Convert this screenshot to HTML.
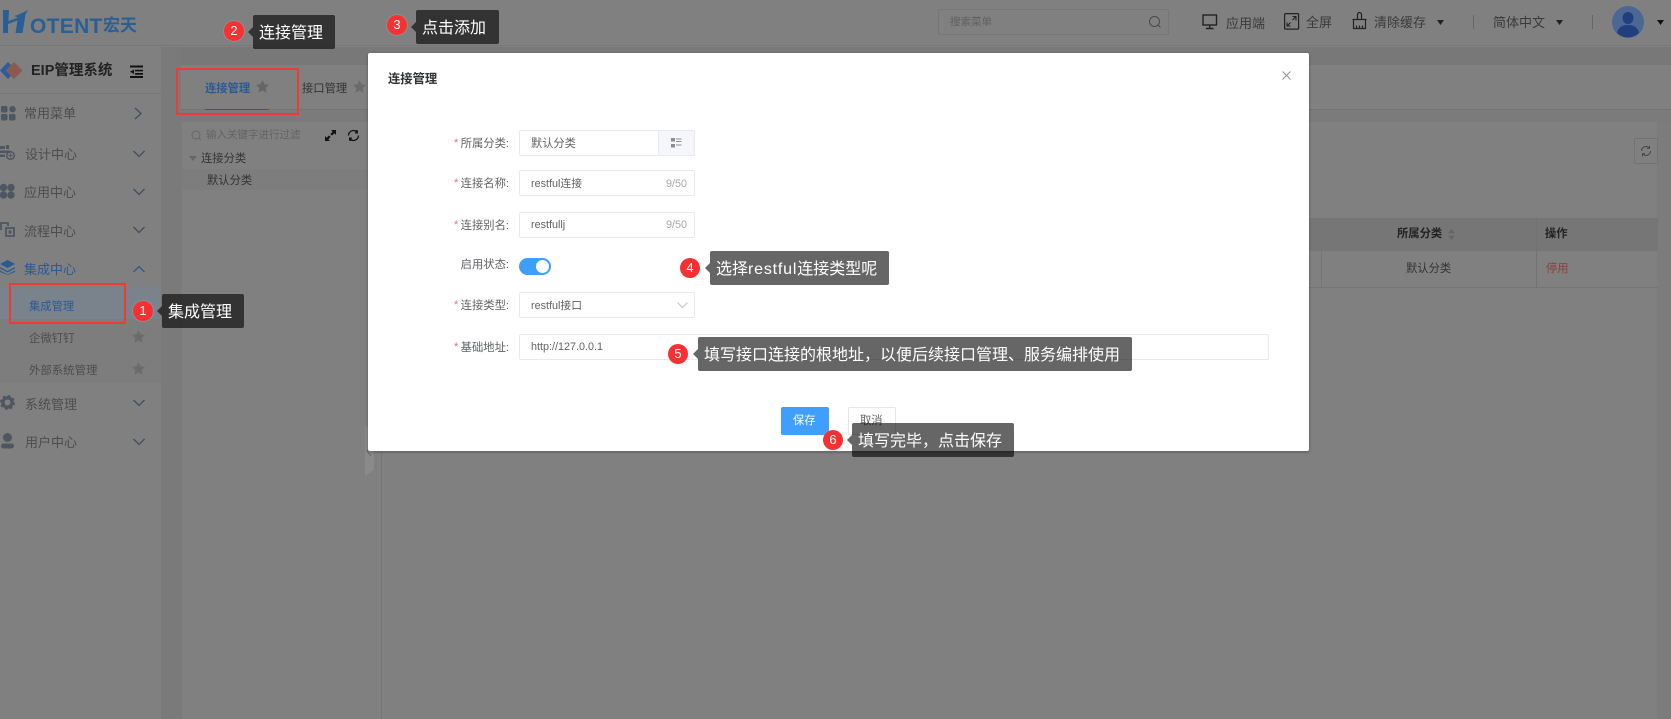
<!DOCTYPE html>
<html lang="zh"><head><meta charset="utf-8"><title>连接管理</title>
<style>
html,body{margin:0;padding:0;width:1671px;height:719px;overflow:hidden;background:#808080}
body{position:relative;font-family:"Liberation Sans","Noto Sans CJK SC",sans-serif;color:#333}
#w{position:absolute;left:0;top:0;width:1671px;height:719px;overflow:hidden;background:#808080;filter:blur(.3px)}
.a{position:absolute;box-sizing:border-box}
.t{position:absolute;white-space:nowrap;line-height:1}
svg{position:absolute;overflow:visible}
.s{font-size:13px;color:#4d4d4d}
.sub{font-size:11.4px;color:#4d4d4d}
.chev{fill:none;stroke:#454d59;stroke-width:1.3}
.lb{font-size:11.3px;color:#606266;width:90px;text-align:right;left:419px}
.req{position:absolute;font-size:11.3px;color:#f56c6c;left:454px;line-height:1}
.in{position:absolute;box-sizing:border-box;background:#fff;border:1px solid #e8eaf0;border-radius:2px;left:519px;width:176px;height:26px}
.v{font-size:10.8px;color:#606266}
.cnt{font-size:10.8px;color:#a6a6a6}
.tip{position:absolute;background:rgba(0,0,0,.6);border-radius:2px;box-sizing:border-box;height:34px;color:#fff;font-size:16px;line-height:37px;padding-left:6px;white-space:nowrap}
.tip:before{content:"";position:absolute;left:-5px;top:12px;border:5px solid transparent;border-left:0;border-right-color:rgba(0,0,0,.6)}
.dot{position:absolute;width:20px;height:20px;border-radius:50%;background:#f73131;color:#fff;font-size:13px;line-height:20px;text-align:center;box-shadow:0 0 0 1px rgba(255,255,255,.12)}
.box{position:absolute;box-sizing:border-box;border:2px solid #ef3b36}
</style></head><body><div id="w">

<!-- header -->
<div class="a" style="left:0;top:0;width:1671px;height:46px;background:#808080;border-bottom:1px solid #787878"></div>
<svg style="left:0;top:0" width="140" height="46"><path d="M3 10H9L8.500 21 18 17.500 14 16C18 15 22 13 28 10L25.500 14.500 22.500 33H15.500L17.500 20.500 8 24 8 33H3Z" fill="#2a5f96"/></svg>
<span class="t" style="left:30px;top:15.500px;font-size:21px;font-weight:700;color:#2b5f94;letter-spacing:.3px">OTENT</span>
<span class="t" style="left:103px;top:17px;font-size:17px;font-weight:700;color:#2b5f94">宏天</span>

<div class="a" style="left:938px;top:9px;width:231px;height:26px;border:1px solid #767676;border-radius:2px"></div>
<span class="t" style="left:950px;top:17px;font-size:10.5px;color:#5f5f5f">搜索菜单</span>
<svg style="left:1148px;top:15px" width="14" height="14" fill="none" stroke="#4a4a4a" stroke-width="1"><circle cx="6.500" cy="6.500" r="5"/><path d="M10 10l2.500 2.500"/></svg>

<svg style="left:1202px;top:14px" width="16" height="16" fill="none" stroke="#222" stroke-width="1.4"><rect x="1" y="1" width="13.500" height="10"/><path d="M7.700 11v3M4 14.500h7.500"/></svg>
<span class="t" style="left:1226px;top:17px;font-size:13px;color:#3a3a3a">应用端</span>
<svg style="left:1284px;top:13px" width="15" height="17" fill="none" stroke="#222" stroke-width="1.2"><rect x=".6" y=".6" width="14" height="15.500" rx="1"/><path d="M8.500 3.500h3.500v4M12 3.500l-3.500 3.500M6.500 13H3V9.500M3 13l3.500-3.500" stroke-width="1.1"/></svg>
<span class="t" style="left:1306px;top:16px;font-size:13px;color:#3a3a3a">全屏</span>
<svg style="left:1351px;top:12px" width="17" height="18" fill="none" stroke="#222" stroke-width="1.2"><path d="M6.500 7V2.500a2 2 0 0 1 4 0V7M1.500 7.500h14M2.500 8v8.500h12V8M5.500 16.500v-3M8.500 16.500v-3M11.500 16.500v-3"/></svg>
<span class="t" style="left:1374px;top:16px;font-size:13px;color:#3a3a3a">清除缓存</span>
<svg style="left:1437px;top:20px" width="8" height="6"><path d="M0 0h7l-3.500 5z" fill="#222"/></svg>
<div class="a" style="left:1473px;top:15px;width:1px;height:14px;background:#666"></div>
<span class="t" style="left:1493px;top:16px;font-size:13px;color:#3a3a3a">简体中文</span>
<svg style="left:1556px;top:20px" width="8" height="6"><path d="M0 0h7l-3.500 5z" fill="#222"/></svg>
<div class="a" style="left:1592px;top:15px;width:1px;height:14px;background:#666"></div>
<svg style="left:1612px;top:6px" width="32" height="32"><circle cx="16" cy="16" r="16" fill="#4d6794"/><ellipse cx="16" cy="12" rx="5.500" ry="6" fill="#223f7d"/><path d="M5 27c1-6 6-8 11-8s10 2 11 8a16 16 0 0 1-22 0z" fill="#223f7d"/></svg>
<svg style="left:1657px;top:20px" width="8" height="6"><path d="M0 0h7l-3.500 5z" fill="#111"/></svg>

<!-- sidebar -->
<div class="a" style="left:0;top:47px;width:161px;height:672px;background:#808080"></div>
<div class="a" style="left:161px;top:47px;width:20px;height:672px;background:#7a7a7a"></div>
<div class="a" style="left:181px;top:47px;width:1490px;height:672px;background:#808080"></div>
<div class="a" style="left:0;top:93px;width:161px;height:1px;background:#767676"></div>
<svg style="left:0;top:61px" width="24" height="20"><path d="M8 1l-8 8.500 8 8.500 3-3-5-5.500 5-5.500z" fill="#2a5c9e"/><path d="M14 1l8.500 8.500L14 18 5.500 9.500z" fill="#8a5a4f"/></svg>
<span class="t" style="left:31px;top:64px;font-size:14.500px;font-weight:700;color:#222">EIP管理系统</span>
<svg style="left:130px;top:65px" width="13" height="13"><path d="M0 .5h13v2H0zM5 4.700h8v1.700H5zM5 8h8v1.700H5zM0 11h13v2H0zM4 4.500v4.500L0 6.700z" fill="#111"/></svg>

<svg style="left:1px;top:106px" width="15" height="15" fill="#4e5661"><rect x="0" y="0" width="6.500" height="6.500" rx="1.500"/><circle cx="11.500" cy="3.200" r="3.200"/><rect x="0" y="8" width="6.500" height="6.500" rx="1.500"/><rect x="8" y="8" width="6.500" height="6.500" rx="1.500"/></svg>
<span class="t s" style="left:24px;top:107px">常用菜单</span>
<svg style="left:134px;top:107px" width="9" height="13"><path class="chev" d="M1 1l6 5.500L1 12"/></svg>

<svg style="left:0;top:145px" width="15" height="15" fill="#4e5661"><path d="M0 1h5v3H0zM6 0h3v4H6zM0 5.500h10V8H0zM0 9.500h5V12H0z"/><circle cx="10.500" cy="10.500" r="3.800" fill="none" stroke="#4e5661" stroke-width="1.500"/><path d="M10 8.500h1v4h-1zM8.500 10h4v1h-4z"/></svg>
<span class="t s" style="left:25px;top:148px">设计中心</span>
<svg style="left:133px;top:150px" width="12" height="8"><path class="chev" d="M.5 1l5.500 5.500L11.500 1"/></svg>

<svg style="left:0;top:184px" width="15" height="15" fill="#4e5661"><circle cx="3.500" cy="3.500" r="3.700"/><circle cx="11" cy="3.500" r="3.700"/><circle cx="3.500" cy="11" r="3.700"/><circle cx="11" cy="11" r="3.700"/></svg>
<span class="t s" style="left:24px;top:186px">应用中心</span>
<svg style="left:133px;top:188px" width="12" height="8"><path class="chev" d="M.5 1l5.500 5.500L11.500 1"/></svg>

<svg style="left:0;top:222px" width="15" height="15" fill="none" stroke="#4e5661" stroke-width="1.800"><path d="M1 8V1h7v3"/><rect x="6" y="6" width="8" height="8"/><rect x="8.500" y="8.500" width="3" height="3" fill="#4e5661" stroke="none"/></svg>
<span class="t s" style="left:24px;top:224.500px">流程中心</span>
<svg style="left:133px;top:226px" width="12" height="8"><path class="chev" d="M.5 1l5.500 5.500L11.500 1"/></svg>

<svg style="left:0;top:260px" width="15" height="15" fill="#2a5a95"><path d="M7.500 0L15 4l-7.500 4L0 4zM0 7l7.500 4L15 7v1.500l-7.500 4-7.500-4zM0 10.500l7.500 4 7.500-4V12l-7.500 3L0 12z"/></svg>
<span class="t" style="left:24px;top:262.500px;font-size:13px;color:#2a5a95">集成中心</span>
<svg style="left:133px;top:265px" width="12" height="8"><path class="chev" style="stroke:#2a5a95" d="M.5 7L6 1.500 11.500 7"/></svg>

<div class="a" style="left:0;top:287px;width:161px;height:32px;background:#7a828c"></div>
<div class="a" style="left:0;top:319px;width:161px;height:64px;background:#7d7d7d"></div>
<span class="t" style="left:29px;top:302px;font-size:11.300px;color:#2a5a95">集成管理</span>
<span class="t sub" style="left:29px;top:334px">企微钉钉</span>
<span class="t sub" style="left:29px;top:366px">外部系统管理</span>
<svg style="left:132px;top:330px" width="13" height="13"><path d="M6.500 0l2 4.300 4.500.6-3.300 3.200.8 4.700-4-2.300-4 2.300.8-4.700L0 4.900l4.500-.6z" fill="#6b6b6b"/></svg>
<svg style="left:132px;top:362px" width="13" height="13"><path d="M6.500 0l2 4.300 4.500.6-3.300 3.200.8 4.700-4-2.300-4 2.300.8-4.700L0 4.900l4.500-.6z" fill="#6b6b6b"/></svg>

<svg style="left:0;top:395px" width="15" height="15"><circle cx="7.500" cy="7.500" r="4.600" fill="none" stroke="#4e5661" stroke-width="3.200"/><circle cx="7.500" cy="7.500" r="6.600" fill="none" stroke="#4e5661" stroke-width="1.800" stroke-dasharray="2.600 2.600"/></svg>
<span class="t s" style="left:25px;top:397.500px">系统管理</span>
<svg style="left:133px;top:399px" width="12" height="8"><path class="chev" d="M.5 1l5.500 5.500L11.500 1"/></svg>

<svg style="left:1px;top:433px" width="13" height="16" fill="#4e5661"><circle cx="6.500" cy="4.500" r="4.500"/><rect x="0" y="10.500" width="13" height="5" rx="2.500"/></svg>
<span class="t s" style="left:25px;top:436px">用户中心</span>
<svg style="left:133px;top:438px" width="12" height="8"><path class="chev" d="M.5 1l5.500 5.500L11.500 1"/></svg>

<!-- main -->
<div class="a" style="left:181px;top:47px;width:1490px;height:18px;background:#787878"></div>
<div class="a" style="left:181px;top:109px;width:1490px;height:1px;background:#747474"></div>
<div class="a" style="left:181px;top:110px;width:1490px;height:12px;background:#7b7b7b"></div>
<div class="a" style="left:1657px;top:122px;width:14px;height:597px;background:#7c7c7c"></div>
<span class="t" style="left:205px;top:84px;font-size:11.300px;font-weight:700;color:#2a5a95">连接管理</span>
<svg style="left:256px;top:80px" width="13" height="13"><path d="M6.500 0l2 4.300 4.500.6-3.300 3.200.8 4.700-4-2.300-4 2.300.8-4.700L0 4.900l4.500-.6z" fill="#666"/></svg>
<div class="a" style="left:205px;top:108.500px;width:64px;height:1.500px;background:#2a5a95"></div>
<span class="t" style="left:302px;top:84px;font-size:11.300px;color:#333">接口管理</span>
<svg style="left:353px;top:80px" width="13" height="13"><path d="M6.500 0l2 4.300 4.500.6-3.300 3.200.8 4.700-4-2.300-4 2.300.8-4.700L0 4.900l4.500-.6z" fill="#6b6b6b"/></svg>

<svg style="left:191px;top:130px" width="11" height="11" fill="none" stroke="#666" stroke-width="1"><circle cx="5" cy="5" r="4"/><path d="M8 8l2 2"/></svg>
<span class="t" style="left:206px;top:130px;font-size:10.500px;color:#636363">输入关键字进行过滤</span>
<svg style="left:325px;top:130px" width="11" height="11"><path d="M6 0h5v5L9.300 3.300 7 5.600 5.400 4 7.700 1.700zM5 11H0V6l1.700 1.700L4 5.400 5.600 7 3.300 9.300z" fill="#111"/></svg>
<svg style="left:347px;top:129px" width="13" height="13" fill="none" stroke="#111" stroke-width="1.300"><path d="M1.500 6.500a5 5 0 0 1 8.500-3.500M11.500 6.500a5 5 0 0 1-8.500 3.500"/><path d="M9 1l2 .5v3h-3zM4 12l-2-.5v-3h3z" fill="#111" stroke="none"/></svg>
<svg style="left:189px;top:156px" width="8" height="5"><path d="M0 0h8l-4 5z" fill="#666"/></svg>
<span class="t" style="left:201px;top:154px;font-size:11.300px;color:#333">连接分类</span>
<div class="a" style="left:181px;top:169px;width:187px;height:21px;background:#7d7d7d"></div>
<span class="t" style="left:207px;top:176px;font-size:11.300px;color:#333">默认分类</span>
<div class="a" style="left:181px;top:122px;width:1px;height:597px;background:#7b7b7b"></div>
<div class="a" style="left:381px;top:122px;width:1px;height:597px;background:#777"></div>
<svg style="left:365px;top:426px" width="10" height="50"><path d="M0 0l9 6v38l-9 6z" fill="#8a8a8a"/><path d="M6 20l-4 5 4 5" fill="none" stroke="#666"/></svg>

<!-- table right visible part -->
<div class="a" style="left:1634px;top:138px;width:24px;height:26px;border:1px solid #737373;border-radius:1px"></div>
<svg style="left:1640px;top:145px" width="12" height="12" fill="none" stroke="#444" stroke-width="1"><path d="M1.500 6a4.500 4.500 0 0 1 7.500-3.300M10.500 6A4.500 4.500 0 0 1 3 9.300"/><path d="M9.500.8v2.500H7M2.500 11.200V8.700H5"/></svg>
<div class="a" style="left:1309px;top:218px;width:349px;height:33px;background:#767676"></div>
<div class="a" style="left:1309px;top:287px;width:349px;height:1px;background:#757575"></div>
<div class="a" style="left:1321px;top:218px;width:1px;height:70px;background:#757575"></div>
<div class="a" style="left:1536px;top:218px;width:1px;height:70px;background:#727272"></div>
<span class="t" style="left:1397px;top:229px;font-size:11.300px;font-weight:700;color:#222">所属分类</span>
<svg style="left:1447px;top:229px" width="9" height="11"><path d="M4.500 0L8 4.300H1zM4.500 11L1 6.700h7z" fill="#656565"/></svg>
<span class="t" style="left:1545px;top:229px;font-size:11.300px;font-weight:700;color:#222">操作</span>
<span class="t" style="left:1406px;top:264px;font-size:11.300px;color:#333">默认分类</span>
<span class="t" style="left:1546px;top:264px;font-size:11.300px;color:#8e3d3d">停用</span>

<!-- modal -->
<div class="a" style="left:368px;top:53px;width:941px;height:398px;background:#fff;border-radius:2px;box-shadow:0 1px 3px rgba(0,0,0,.3)"></div>
<span class="t" style="left:388px;top:73px;font-size:12.300px;font-weight:700;color:#303133">连接管理</span>
<svg style="left:1282px;top:71px" width="9" height="9" fill="none" stroke="#909399" stroke-width="1"><path d="M.5.500l8 8M8.500.500l-8 8"/></svg>

<span class="req" style="top:138px">*</span><span class="t lb" style="top:139px">所属分类:</span>
<div class="in" style="top:130px"></div>
<div class="a" style="left:658px;top:130px;width:37px;height:26px;background:#f5f7fa;border:1px solid #e8eaf0;border-radius:0 2px 2px 0"></div>
<svg style="left:671px;top:138px" width="11" height="10" fill="#8d8d8d"><rect x="0" y="0" width="4" height="3.500"/><rect x="0" y="6" width="4" height="3.500"/><rect x="5" y=".5" width="5.500" height="1"/><rect x="5" y="3" width="5.500" height="1"/><rect x="5" y="6.500" width="5.500" height="1"/></svg>
<span class="t" style="left:531px;top:139px;font-size:11.200px;color:#606266">默认分类</span>

<span class="req" style="top:178px">*</span><span class="t lb" style="top:179px">连接名称:</span>
<div class="in" style="top:170px"></div>
<span class="t v" style="left:531px;top:179px">restful连接</span>
<span class="t cnt" style="left:666px;top:178.500px">9/50</span>

<span class="req" style="top:220px">*</span><span class="t lb" style="top:220.500px">连接别名:</span>
<div class="in" style="top:212px"></div>
<span class="t v" style="left:531px;top:220px">restfullj</span>
<span class="t cnt" style="left:666px;top:220px">9/50</span>

<span class="t lb" style="top:260px">启用状态:</span>
<div class="a" style="left:519px;top:258px;width:32px;height:17px;border-radius:9px;background:#409eff"></div>
<div class="a" style="left:536px;top:260px;width:13px;height:13px;border-radius:50%;background:#fff"></div>

<span class="req" style="top:300px">*</span><span class="t lb" style="top:301px">连接类型:</span>
<div class="in" style="top:292px"></div>
<span class="t v" style="left:531px;top:301px">restful接口</span>
<svg style="left:677px;top:302px" width="11" height="6" fill="none" stroke="#c0c4cc" stroke-width="1"><path d="M.5.500l5 5 5-5"/></svg>

<span class="req" style="top:342px">*</span><span class="t lb" style="top:342.500px">基础地址:</span>
<div class="in" style="top:334px;width:750px"></div>
<span class="t v" style="left:531px;top:342px">http://127.0.0.1</span>

<div class="a" style="left:781px;top:407px;width:48px;height:28px;background:#409eff;border-radius:2px"></div>
<span class="t" style="left:793px;top:416px;font-size:11.300px;color:#fff">保存</span>
<div class="a" style="left:848px;top:407px;width:48px;height:28px;background:#fff;border:1px solid #e4e6ea;border-radius:2px"></div>
<span class="t" style="left:860px;top:416px;font-size:11.300px;color:#606266">取消</span>

<!-- annotations -->
<div class="box" style="left:176px;top:68px;width:123px;height:47px"></div>
<div class="box" style="left:9px;top:283px;width:117px;height:41px"></div>

<div class="dot" style="left:133px;top:301px">1</div><div class="tip" style="left:162px;top:294px;width:82px">集成管理</div>
<div class="dot" style="left:224px;top:21px">2</div><div class="tip" style="left:253px;top:15px;width:82px">连接管理</div>
<div class="dot" style="left:387px;top:15px">3</div><div class="tip" style="left:416px;top:10px;width:83px">点击添加</div>
<div class="dot" style="left:680px;top:258px">4</div><div class="tip" style="left:710px;top:251px;width:179px">选择<span style="letter-spacing:.8px">restful</span>连接类型呢</div>
<div class="dot" style="left:668px;top:344px">5</div><div class="tip" style="left:698px;top:337px;width:434px">填写接口连接的根地址，以便后续接口管理、服务编排使用</div>
<div class="dot" style="left:823px;top:430px">6</div><div class="tip" style="left:852px;top:423px;width:162px">填写完毕，点击保存</div>
</div></body></html>
